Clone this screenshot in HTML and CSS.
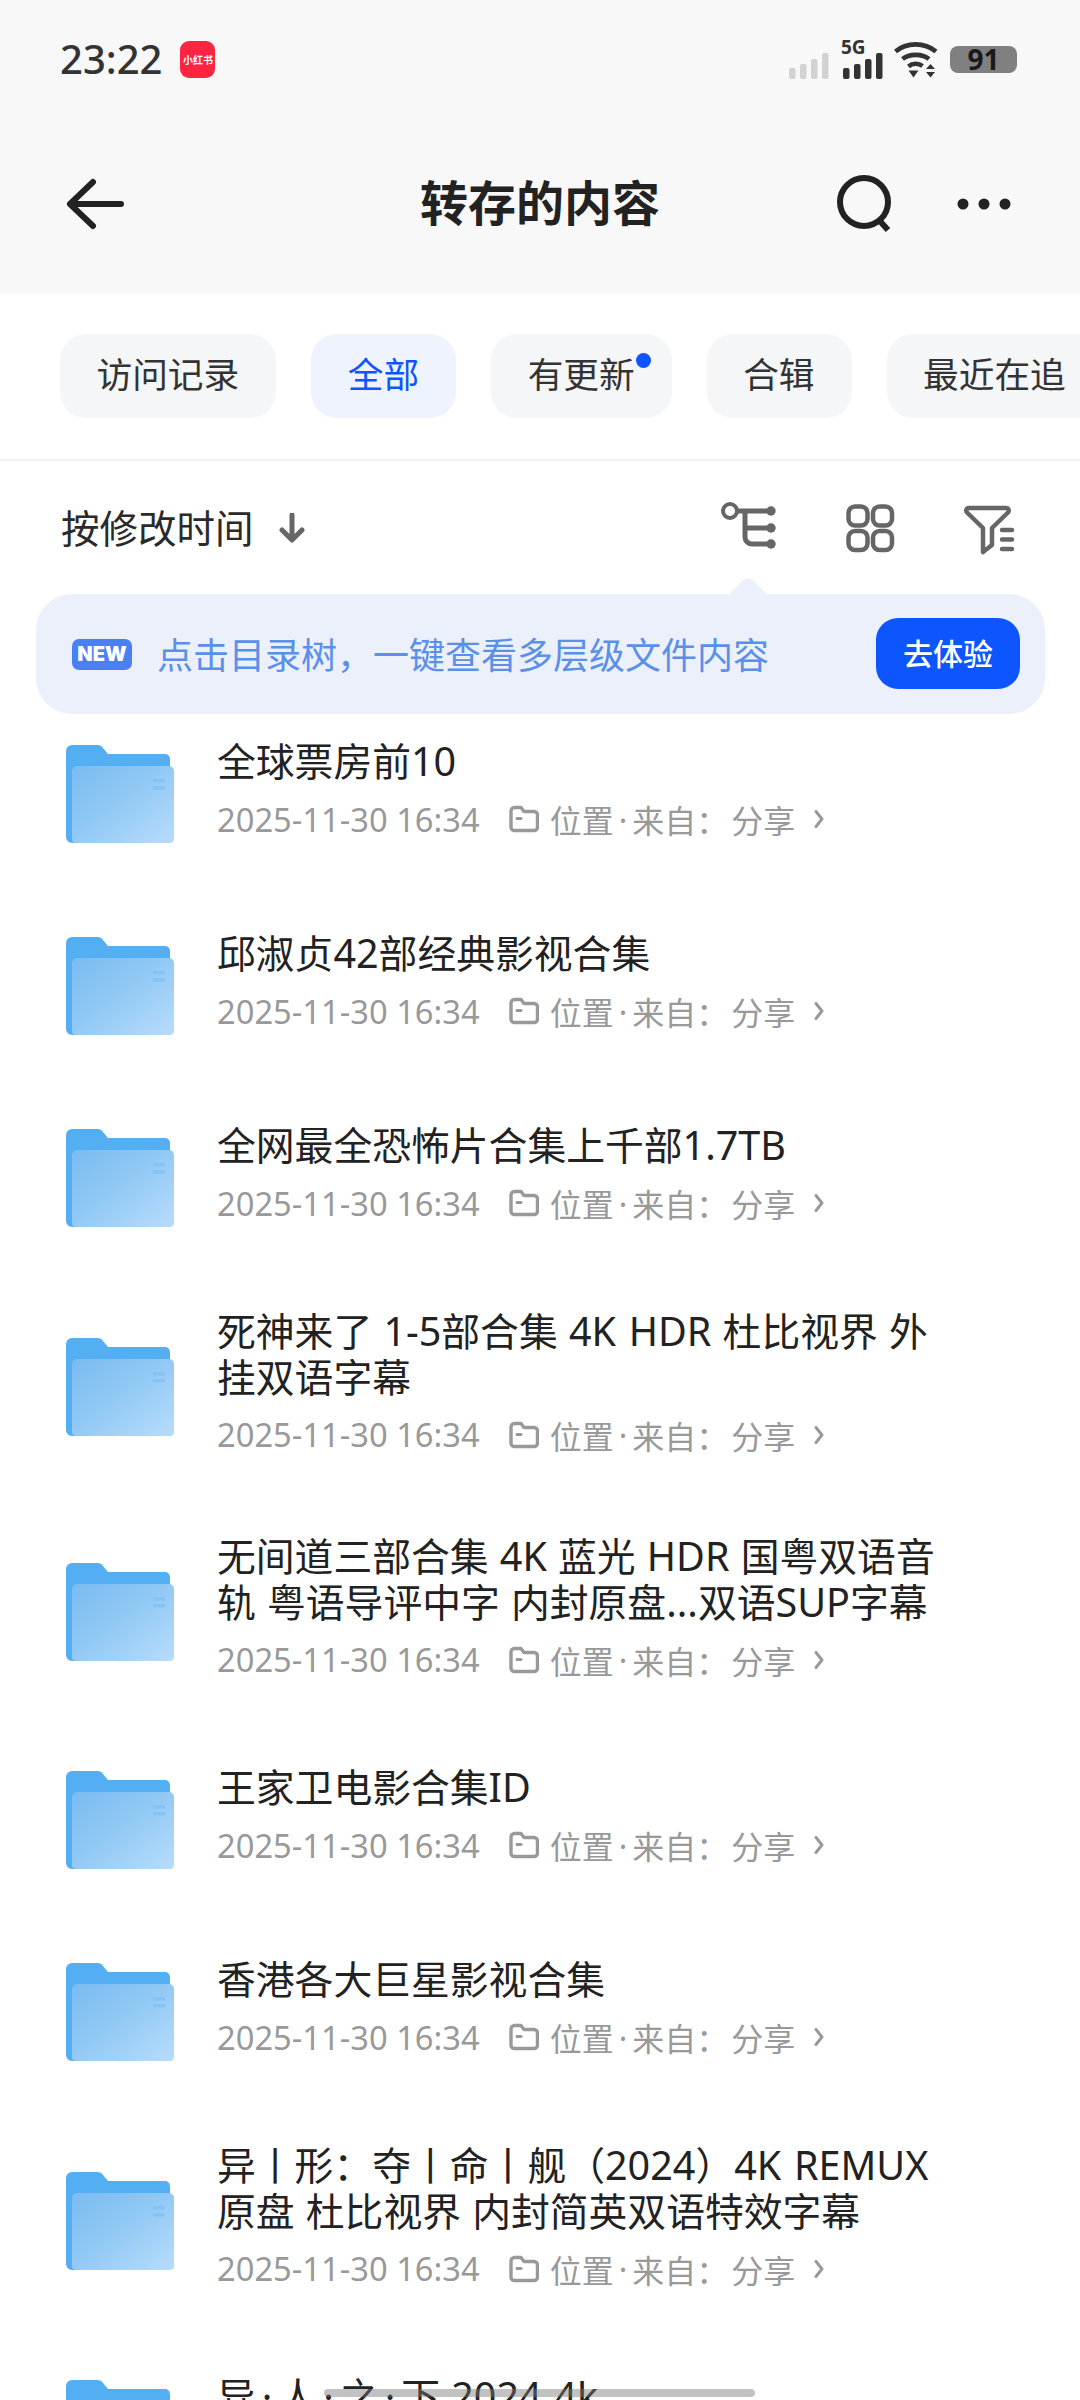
FILE: index.html
```html
<!DOCTYPE html>
<html lang="zh-CN">
<head>
<meta charset="utf-8">
<title>转存的内容</title>
<link rel="stylesheet" href="styles.css">
</head>
<body>
<svg class="defs" width="0" height="0" aria-hidden="true">
  <defs>
    <linearGradient id="fg" x1="0" y1="0" x2="1" y2="1">
      <stop offset="0" stop-color="#79bbf1"/>
      <stop offset="0.45" stop-color="#90c8f4"/>
      <stop offset="1" stop-color="#b8dcfb"/>
    </linearGradient>
    <symbol id="folder" viewBox="0 0 108 98">
      <path d="M0 6a6 6 0 0 1 6-6h25c3 0 5 1 6 3l5 6h57a5 5 0 0 1 5 5v84H6a6 6 0 0 1-6-6z" fill="#54aef2"/>
      <path d="M6 26a5 5 0 0 1 5-5h92a5 5 0 0 1 5 5v68a4 4 0 0 1-4 4H10a4 4 0 0 1-4-4z" fill="url(#fg)"/>
      <rect x="87" y="34" width="12" height="3.5" fill="#86c2f3"/>
      <rect x="87" y="41" width="12" height="3.5" fill="#86c2f3"/>
    </symbol>
    <symbol id="loc" viewBox="0 0 30 28">
      <path d="M2 6a3.500 3.500 0 0 1 3.500-3.500h6.500l3 4h10a3.500 3.500 0 0 1 3.500 3.500v12a3.500 3.500 0 0 1-3.500 3.500h-19A3.500 3.500 0 0 1 2 22.500z" fill="none" stroke="#999" stroke-width="3.400" stroke-linejoin="round"/>
      <path d="M8 13.500h4" stroke="#999" stroke-width="3" stroke-linecap="round"/>
    </symbol>
    <symbol id="chev" viewBox="0 0 10 18">
      <path d="M2 1.500l6 7.500-6 7.500" fill="none" stroke="#999" stroke-width="3" stroke-linecap="round" stroke-linejoin="round"/>
    </symbol>
  </defs>
</svg>

<div class="screen">
  <header class="top">
    <div class="status">
      <div class="status-left">
        <span class="clock">23:22</span>
        <span class="app-badge">小红书</span>
      </div>
      <div class="status-right">
        <svg class="sig" width="40" height="26" viewBox="0 0 40 26"><g fill="#d2d2d2"><rect x="0" y="15" width="6.500" height="11" rx="2"/><rect x="11" y="11" width="6.500" height="15" rx="2"/><rect x="22" y="6" width="6.500" height="20" rx="2"/><rect x="33" y="0" width="6.500" height="26" rx="2"/></g></svg>
        <div class="sig5g">
          <span class="g5">5G</span>
          <svg class="sig-dark" width="40" height="26" viewBox="0 0 40 26"><g fill="#333"><rect x="0" y="15" width="6.500" height="11" rx="2"/><rect x="11" y="11" width="6.500" height="15" rx="2"/><rect x="22" y="6" width="6.500" height="20" rx="2"/><rect x="33" y="0" width="6.500" height="26" rx="2"/></g></svg>
        </div>
        <svg class="wifi" width="44" height="38" viewBox="0 0 44 38">
          <g fill="none" stroke="#333" stroke-width="4.600">
            <path d="M1.500 10.500C12.500 1 30.500 1 42 10.500"/>
            <path d="M8.500 18C15 12.500 28.500 12.500 35 18"/>
            <path d="M14.500 25.500C18.500 22 24.500 22 28.500 25"/>
          </g>
          <path d="M14.500 29.500h10l-5 7z" fill="#333"/>
          <path d="M32 28l4.500-5 4.500 5zM32 31l4.500 5.500 4.500-5.500z" fill="#333"/>
        </svg>
        <span class="battery">91</span>
      </div>
    </div>
    <div class="nav">
      <svg class="nav-back" width="68" height="56" viewBox="0 0 68 56"><path d="M59 28H8M31 6L8 28l23 22" fill="none" stroke="#222" stroke-width="6" stroke-linecap="round" stroke-linejoin="round"/></svg>
      <h1 class="nav-title">转存的内容</h1>
      <div class="nav-actions">
        <svg width="60" height="60" viewBox="0 0 60 60"><circle cx="28" cy="28" r="24" fill="none" stroke="#222" stroke-width="6"/><path d="M42 45l10 11" stroke="#222" stroke-width="6"/></svg>
        <svg width="56" height="14" viewBox="0 0 56 14"><g fill="#222"><circle cx="7" cy="7" r="5.500"/><circle cx="28" cy="7" r="5.500"/><circle cx="49" cy="7" r="5.500"/></g></svg>
      </div>
    </div>
  </header>

  <nav class="tabs">
    <span class="tab">访问记录</span>
    <span class="tab tab-on">全部</span>
    <span class="tab tab-dot">有更新</span>
    <span class="tab">合辑</span>
    <span class="tab">最近在追</span>
  </nav>

  <div class="sortbar">
    <span class="sort-label">按修改时间</span>
    <svg class="sort-arrow" width="28" height="30" viewBox="0 0 28 30"><path d="M14 2v24M4 17l10 10 10-10" fill="none" stroke="#666" stroke-width="5" stroke-linecap="round" stroke-linejoin="round"/></svg>
    <div class="tools">
      <svg width="56" height="56" viewBox="0 0 56 56">
        <circle cx="9" cy="11" r="7" fill="none" stroke="#666" stroke-width="4"/>
        <path d="M16 11h34M24 11v26a7 7 0 0 0 7 7h19M24 28h26" fill="none" stroke="#666" stroke-width="5"/>
        <g fill="#666"><circle cx="50" cy="11" r="4.700"/><circle cx="50" cy="28" r="4.700"/><circle cx="50" cy="44" r="4.700"/></g>
      </svg>
      <svg width="56" height="56" viewBox="0 0 56 56">
        <g fill="none" stroke="#666" stroke-width="4.500">
          <rect x="6.500" y="6.500" width="19" height="19" rx="6.500"/>
          <rect x="31" y="6.500" width="19" height="19" rx="6.500"/>
          <rect x="6.500" y="31" width="19" height="19" rx="6.500"/>
          <rect x="31" y="31" width="19" height="19" rx="6.500"/>
        </g>
      </svg>
      <svg width="56" height="56" viewBox="0 0 56 56">
        <path d="M6 8h37c2.500 0 3.500 2.500 2 4.500L29 28v17l-9 7V28L4 12.500C2.500 10.500 3.500 8 6 8z" fill="none" stroke="#666" stroke-width="4.500" stroke-linejoin="round"/>
        <path d="M39 30h10M39 39.500h10M39 49h10" stroke="#666" stroke-width="4.500" stroke-linecap="round"/>
      </svg>
    </div>
  </div>

  <aside class="tip">
    <span class="tip-new">NEW</span>
    <span class="tip-text">点击目录树，一键查看多层级文件内容</span>
    <span class="tip-btn">去体验</span>
  </aside>

  <ul class="list">
    <li class="row"><svg class="folder"><use href="#folder"/></svg><div class="info"><div class="name">全球票房前<span class="lat">10</span></div><div class="meta"><span class="date">2025-11-30 16:34</span><svg class="loc"><use href="#loc"/></svg><span>位置</span><span class="sep">·</span><span>来自：</span><span class="src">分享</span><svg class="chev"><use href="#chev"/></svg></div></div></li>
    <li class="row"><svg class="folder"><use href="#folder"/></svg><div class="info"><div class="name">邱淑贞<span class="lat">42</span>部经典影视合集</div><div class="meta"><span class="date">2025-11-30 16:34</span><svg class="loc"><use href="#loc"/></svg><span>位置</span><span class="sep">·</span><span>来自：</span><span class="src">分享</span><svg class="chev"><use href="#chev"/></svg></div></div></li>
    <li class="row"><svg class="folder"><use href="#folder"/></svg><div class="info"><div class="name">全网最全恐怖片合集上千部<span class="lat">1.7TB</span></div><div class="meta"><span class="date">2025-11-30 16:34</span><svg class="loc"><use href="#loc"/></svg><span>位置</span><span class="sep">·</span><span>来自：</span><span class="src">分享</span><svg class="chev"><use href="#chev"/></svg></div></div></li>
    <li class="row"><svg class="folder"><use href="#folder"/></svg><div class="info"><div class="name">死神来了 <span class="lat">1-5</span>部合集 <span class="lat">4K HDR</span> 杜比视界 外挂双语字幕</div><div class="meta"><span class="date">2025-11-30 16:34</span><svg class="loc"><use href="#loc"/></svg><span>位置</span><span class="sep">·</span><span>来自：</span><span class="src">分享</span><svg class="chev"><use href="#chev"/></svg></div></div></li>
    <li class="row"><svg class="folder"><use href="#folder"/></svg><div class="info"><div class="name">无间道三部合集 <span class="lat">4K</span> 蓝光 <span class="lat">HDR</span> 国粤双语音轨 粤语导评中字 内封原盘<span class="lat">...</span>双语<span class="lat">SUP</span>字幕</div><div class="meta"><span class="date">2025-11-30 16:34</span><svg class="loc"><use href="#loc"/></svg><span>位置</span><span class="sep">·</span><span>来自：</span><span class="src">分享</span><svg class="chev"><use href="#chev"/></svg></div></div></li>
    <li class="row"><svg class="folder"><use href="#folder"/></svg><div class="info"><div class="name">王家卫电影合集<span class="lat">ID</span></div><div class="meta"><span class="date">2025-11-30 16:34</span><svg class="loc"><use href="#loc"/></svg><span>位置</span><span class="sep">·</span><span>来自：</span><span class="src">分享</span><svg class="chev"><use href="#chev"/></svg></div></div></li>
    <li class="row"><svg class="folder"><use href="#folder"/></svg><div class="info"><div class="name">香港各大巨星影视合集</div><div class="meta"><span class="date">2025-11-30 16:34</span><svg class="loc"><use href="#loc"/></svg><span>位置</span><span class="sep">·</span><span>来自：</span><span class="src">分享</span><svg class="chev"><use href="#chev"/></svg></div></div></li>
    <li class="row"><svg class="folder"><use href="#folder"/></svg><div class="info"><div class="name">异丨形：夺丨命丨舰（<span class="lat">2024</span>）<span class="lat">4K REMUX</span> 原盘 杜比视界 内封简英双语特效字幕</div><div class="meta"><span class="date">2025-11-30 16:34</span><svg class="loc"><use href="#loc"/></svg><span>位置</span><span class="sep">·</span><span>来自：</span><span class="src">分享</span><svg class="chev"><use href="#chev"/></svg></div></div></li>
    <li class="row"><svg class="folder"><use href="#folder"/></svg><div class="info"><div class="name">异<span class="lat dot">·</span>人<span class="lat dot">·</span>之<span class="lat dot">·</span>下 <span class="lat">2024 4k</span></div><div class="meta"><span class="date">2025-11-30 16:34</span></div></div></li>
  </ul>

  <div class="home-bar"></div>
</div>
</body>
</html>
```
FILE: styles.css
```css
* { box-sizing: border-box; }
html, body { margin: 0; padding: 0; background: #fff; }
body { font-family: "Noto Sans CJK SC", "Noto Sans", sans-serif; color: #222; }
.defs { position: absolute; }
.screen { position: relative; width: 1080px; height: 2400px; overflow: hidden; }

.top { background: #f8f8f8; height: 293px; }
.status { height: 116px; padding: 40px 63px 0 60px; display: flex; justify-content: space-between; align-items: flex-start; }
.status-left { display: flex; align-items: center; gap: 18px; height: 38px; }
.clock { font-family: "Noto Sans", sans-serif; font-size: 40px; font-weight: 500; line-height: 36px; color: #333; }
.app-badge { width: 35px; height: 37px; border-radius: 9px; background: #ff2442; color: #fff; font-size: 10px; font-weight: 700; display: flex; align-items: center; justify-content: center; white-space: nowrap; }
.status-right { display: flex; align-items: flex-end; height: 39px; }
.sig { margin-right: 14px; }
.sig5g { position: relative; width: 40px; height: 26px; margin-right: 11px; }
.g5 { position: absolute; left: -2px; top: -15px; font-size: 19px; line-height: 19px; font-weight: 700; color: #333; font-family: "Noto Sans", sans-serif; }
.sig-dark { display: block; }
.wifi { margin-right: 12px; }
.battery { width: 67px; height: 27px; border-radius: 8px; background: #808080; color: #1a1a1a; font-family: "Noto Sans", sans-serif; font-size: 28px; font-weight: 700; line-height: 27px; text-align: center; margin-bottom: 6px; }

.nav { position: relative; height: 177px; display: flex; align-items: flex-start; padding: 60px 68px 0 62px; justify-content: space-between; }
.nav-back { display: block; }
.nav-title { position: absolute; left: 0; right: 0; top: 56px; margin: 0; text-align: center; font-size: 48px; line-height: 56px; font-weight: 700; color: #222; }
.nav-actions { display: flex; align-items: center; gap: 60px; height: 56px; }

.tabs { display: flex; gap: 35px; padding: 41px 0 41px 60px; border-bottom: 2px solid #f3f3f3; overflow: hidden; height: 168px; }
.tab { flex: none; position: relative; height: 84px; line-height: 78px; padding: 0 37px 0 36.500px; font-size: 35.700px; background: #f5f6f8; border-radius: 26px; color: #333; }
.tab-on { background: #eef3fe; color: #0d55ff; }
.tab-dot::after { content: ""; position: absolute; top: 19px; right: 21px; width: 15px; height: 15px; border-radius: 50%; background: #0d55ff; }

.sortbar { height: 133px; display: flex; align-items: center; padding: 0 61px 0 61px; }
.sort-label { font-size: 38.500px; line-height: 54px; margin-top: -3px; color: #2a2a2a; }
.sort-arrow { margin-left: 24px; }
.tools { margin-left: auto; display: flex; gap: 65px; }
.tools svg { display: block; }

.tip { position: relative; z-index: 2; margin: 0 35px -16px 36px; height: 120px; background: #ebf0fb; border-radius: 36px; display: flex; align-items: center; padding: 0 25px 0 36px; }
.tip::before { content: ""; position: absolute; left: 696px; top: -12px; width: 32px; height: 32px; background: #ebf0fb; transform: rotate(45deg); border-radius: 7px; }
.tip-new { position: relative; width: 60px; height: 31px; border-radius: 7px; background: #4a80f5; color: #fff; font-family: "Inter", sans-serif; font-size: 20px; font-weight: 900; line-height: 31px; text-align: center; }
.tip-text { position: relative; margin: -2px 0 0 25px; font-size: 36px; color: #5a8fea; }
.tip-btn { margin: -1px 0 0 auto; position: relative; width: 144px; height: 71px; border-radius: 22px; background: #0d55ff; color: #fff; font-size: 30px; font-weight: 500; line-height: 69px; text-align: center; }

.list { list-style: none; margin: 0; padding: 0; }
.row { min-height: 192px; display: flex; align-items: center; padding: 34.500px 0 34.500px 66px; gap: 43px; }
.folder { flex: none; width: 108px; height: 98px; }
.info { width: 733px; margin-bottom: 8px; }
.name { margin-top: -3px; font-size: 38.800px; line-height: 46px; word-spacing: 2.500px; color: #222; }
.lat { font-family: "Noto Sans", sans-serif; font-size: 39.500px; line-height: 1; }
.dot { margin: 0 6px; }
.meta { display: flex; align-items: center; margin-top: 15px; height: 44px; font-size: 32px; color: #999; }
.date { font-family: "Noto Sans", sans-serif; font-size: 32.700px; margin-right: 29px; }
.loc { width: 30px; height: 28px; margin-right: 11px; flex: none; }
.sep { font-family: "Noto Sans", sans-serif; margin: 0 5px; }
.src { margin-left: 3px; }
.chev { width: 10px; height: 18px; margin-left: 19px; flex: none; }

.home-bar { position: absolute; left: 324px; top: 2389px; width: 431px; height: 8px; border-radius: 4px; background: rgba(120,120,120,.45); }
```
